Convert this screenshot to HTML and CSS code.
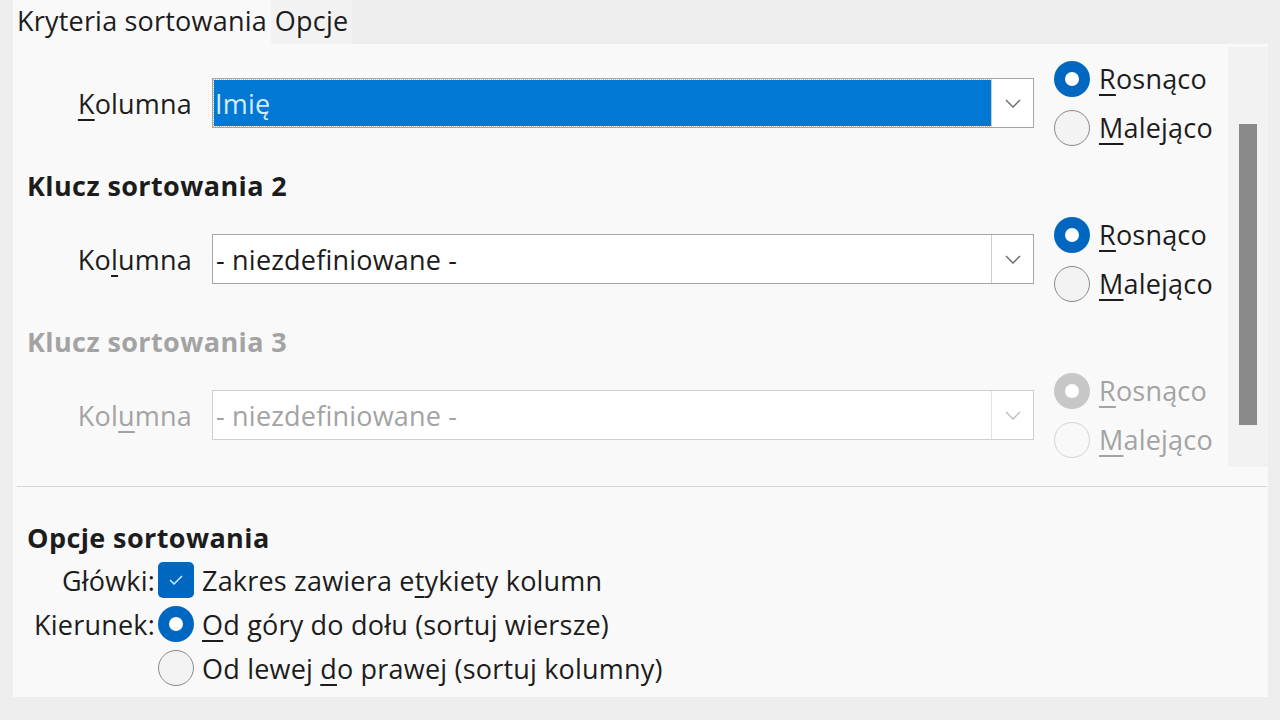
FILE: index.html
```html
<!DOCTYPE html>
<html lang="pl">
<head>
<meta charset="utf-8">
<title>Sortuj</title>
<link rel="stylesheet" href="styles.css">
</head>
<body>
<div class="dialog">
  <div class="tabs">
    <div class="tab active">Kryteria sortowania</div>
    <div class="tab">Opcje</div>
  </div>
  <div class="panel">
    <div class="scroller">
      <div class="keys">
        <div class="key-row">
          <div class="label"><u>K</u>olumna</div>
          <div class="combo">
            <div class="combo-value selected"><span>Imię</span></div>
            <div class="combo-btn"><svg width="16" height="9" viewBox="0 0 16 9"><polyline points="1,1 8,8 15,1" fill="none" stroke="#6a6a6a" stroke-width="1.4"/></svg></div>
          </div>
          <div class="radio-group">
            <div class="radio-item"><span class="radio checked"></span><span><u>R</u>osnąco</span></div>
            <div class="radio-item"><span class="radio"></span><span><u>M</u>alejąco</span></div>
          </div>
        </div>
        <div class="key-heading">Klucz sortowania 2</div>
        <div class="key-row">
          <div class="label">Ko<u>l</u>umna</div>
          <div class="combo">
            <div class="combo-value"><span>- niezdefiniowane -</span></div>
            <div class="combo-btn"><svg width="16" height="9" viewBox="0 0 16 9"><polyline points="1,1 8,8 15,1" fill="none" stroke="#6a6a6a" stroke-width="1.4"/></svg></div>
          </div>
          <div class="radio-group">
            <div class="radio-item"><span class="radio checked"></span><span><u>R</u>osnąco</span></div>
            <div class="radio-item"><span class="radio"></span><span><u>M</u>alejąco</span></div>
          </div>
        </div>
        <div class="key-heading disabled">Klucz sortowania 3</div>
        <div class="key-row disabled">
          <div class="label">Kol<u>u</u>mna</div>
          <div class="combo">
            <div class="combo-value"><span>- niezdefiniowane -</span></div>
            <div class="combo-btn"><svg width="16" height="9" viewBox="0 0 16 9"><polyline points="1,1 8,8 15,1" fill="none" stroke="#bdbdbd" stroke-width="1.4"/></svg></div>
          </div>
          <div class="radio-group">
            <div class="radio-item"><span class="radio checked"></span><span><u>R</u>osnąco</span></div>
            <div class="radio-item"><span class="radio"></span><span><u>M</u>alejąco</span></div>
          </div>
        </div>
      </div>
      <div class="scrollbar"><div class="thumb"></div></div>
    </div>
    <div class="divider"></div>
    <div class="options">
      <div class="key-heading">Opcje sortowania</div>
      <div class="opt-grid">
        <div class="opt-label">Główki:</div>
        <div class="opt-control"><span class="checkbox"><svg width="16" height="12" viewBox="0 0 16 12"><polyline points="2,6 6,10 14,2" fill="none" stroke="#d6ebff" stroke-width="1.5"/></svg></span><span>Zakres zawiera e<u>t</u>ykiety kolumn</span></div>
        <div class="opt-label">Kierunek:</div>
        <div class="opt-control"><span class="radio checked"></span><span><u>O</u>d góry do dołu (sortuj wiersze)</span></div>
        <div class="opt-label"></div>
        <div class="opt-control"><span class="radio"></span><span>Od lewej <u>d</u>o prawej (sortuj kolumny)</span></div>
      </div>
    </div>
  </div>
</div>
</body>
</html>
```
FILE: styles.css
```css
html, body {
  margin: 0;
  padding: 0;
}
body {
  width: 1280px;
  height: 720px;
  overflow: hidden;
  background: #eeeeee;
  font-family: "Open Sans", "Noto Sans", sans-serif;
  font-size: 27px;
  letter-spacing: 0.2px;
  color: #1c1c1c;
}
u {
  text-decoration-thickness: 2px;
  text-underline-offset: 5px;
}
.dialog {
  padding: 0 12px 0 13px;
}
.tabs {
  display: flex;
  height: 44px;
}
.tab {
  padding: 0 4px;
  line-height: 42px;
  background: #f2f2f2;
}
.tab.active {
  background: #f9f9f9;
}
.panel {
  background: #f9f9f9;
  height: 653px;
  display: flex;
  flex-direction: column;
}
.scroller {
  display: flex;
  height: 423px;
}
.keys {
  flex: 1;
  padding: 10px 0 0 14px;
}
.scrollbar {
  width: 40px;
  margin-top: 3px;
  background: #f2f2f2;
  padding: 77px 0 0 11px;
  box-sizing: border-box;
}
.thumb {
  width: 18px;
  height: 301px;
  background: #8a8a8a;
}
.key-row {
  display: grid;
  grid-template-columns: 165px 822px auto;
  column-gap: 20px;
  align-items: center;
}
.label {
  text-align: right;
}
.combo {
  display: flex;
  height: 50px;
  box-sizing: border-box;
  border: 1.5px solid #a6a6a6;
  background: #ffffff;
}
.combo-value {
  flex: 1;
  display: flex;
  align-items: center;
  padding-left: 3px;
}
.combo-value.selected {
  margin: 1px 0 1px 1px;
  padding-left: 1px;
  background: #0078d4;
  color: #d4ebff;
  outline: 1px dotted #b9b9b9;
}
.combo-btn {
  width: 41px;
  border-left: 1px solid #cccccc;
  display: flex;
  align-items: center;
  justify-content: center;
}
.radio-group {
  display: flex;
  flex-direction: column;
}
.radio-item {
  height: 49px;
  display: flex;
  align-items: center;
  gap: 9px;
}
.radio {
  width: 36px;
  height: 36px;
  box-sizing: border-box;
  border-radius: 50%;
  border: 1.5px solid #8a8a8a;
  background: #f3f3f3;
  display: flex;
  align-items: center;
  justify-content: center;
  flex: none;
}
.radio.checked {
  border: none;
  background: #0067c0;
}
.radio.checked::after {
  content: "";
  width: 14px;
  height: 14px;
  border-radius: 50%;
  background: #ffffff;
}
.key-heading {
  font-weight: 700;
  font-size: 27px;
  letter-spacing: 0.4px;
  height: 36px;
  line-height: 36px;
  margin: 16px 0 6px;
}
.disabled,
.key-heading.disabled {
  color: #a3a3a3;
}
.key-row.disabled .combo {
  border-color: #cfcfcf;
}
.key-row.disabled .combo-btn {
  border-left-color: #e3e3e3;
}
.key-row.disabled .radio {
  border-color: #d3d3d3;
  background: #f9f9f9;
}
.key-row.disabled .radio.checked {
  background: #c7c7c7;
}
.divider {
  margin: 19px 1px 0 4px;
  height: 1px;
  background: #d6d6d6;
}
.options {
  padding: 17px 0 0 14px;
}
.options .key-heading {
  margin: 16px 0 2px;
}
.opt-grid {
  display: grid;
  grid-template-columns: 128px auto;
  grid-auto-rows: 44px;
  column-gap: 3px;
  align-items: center;
}
.opt-label {
  text-align: right;
}
.opt-control {
  display: flex;
  align-items: center;
  gap: 8px;
}
.checkbox {
  width: 36px;
  height: 36px;
  border-radius: 5px;
  background: #0067c0;
  display: flex;
  align-items: center;
  justify-content: center;
  flex: none;
}
```
